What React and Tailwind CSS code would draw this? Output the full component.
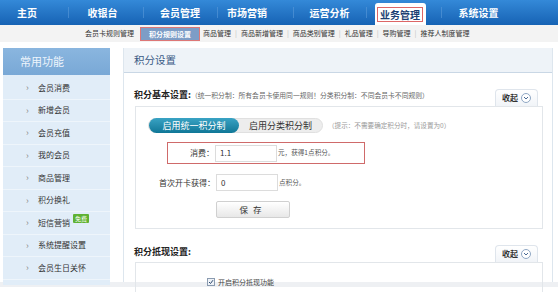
import React from 'react';

const topNav = [
  { label: '主页', w: 'w-[68px]', pad: 'pr-[14px]' },
  { label: '收银台', w: 'w-[75px]', pad: 'pr-[6px]' },
  { label: '会员管理', w: 'w-[74px]', pad: '' },
  { label: '市场营销', w: 'w-[76px]', pad: 'pr-[16px]' },
  { label: '运营分析', w: 'w-[73px]', pad: '' },
  { label: '业务管理', w: 'w-[75px]', pad: '', active: true },
  { label: '系统设置', w: 'w-[75px]', pad: '' },
];

const subNav = [
  '会员卡规则管理',
  '积分规则设置',
  '商品管理',
  '商品新增管理',
  '商品类别管理',
  '礼品管理',
  '导购管理',
  '推荐人制度管理',
];

const sideItems = [
  '会员消费',
  '新增会员',
  '会员充值',
  '我的会员',
  '商品管理',
  '积分换礼',
  '短信营销',
  '系统提醒设置',
  '会员生日关怀',
];

const CollapseBtn = () => (
  <div className="flex items-center gap-[3px] h-[17px] px-[6px] rounded-t-[4px] border border-b-0 border-[#dfe5ec] bg-gradient-to-b from-white to-[#f1f4f8]">
    <span className="text-[8px] font-bold text-[#333]">收起</span>
    <span className="flex items-center justify-center w-[10px] h-[10px] rounded-full border border-[#8fa7c4] bg-white">
      <svg width="6" height="4" viewBox="0 0 6 4">
        <path d="M1 1 L3 3 L5 1" fill="none" stroke="#4a6a94" strokeWidth="1" />
      </svg>
    </span>
  </div>
);

export default function App() {
  return (
    <div className="w-[558px] h-[292px] overflow-hidden bg-white font-['Noto_Sans_CJK_SC','Noto_Sans',sans-serif]">
      {/* Top nav */}
      <div className="flex h-[25px] bg-gradient-to-b from-[#3489d8] to-[#1663b4]">
        {topNav.map((item, i) => (
          <div key={item.label} className={`relative flex items-end justify-center ${item.w} ${item.pad}`}>
            {i > 0 && <span className="absolute left-0 top-[7px] h-[11px] w-px bg-[#5a9ad8] opacity-60" />}
            {item.active ? (
              <div className="flex items-center justify-center w-[51px] h-[22px] ml-[-7px] bg-white rounded-t-[3px]">
                <span className="px-[2px] h-[15px] leading-[13px] border border-[#d66] text-[10px] font-bold text-[#1b3f73]">
                  {item.label}
                </span>
              </div>
            ) : (
              <span className="h-full flex items-center text-[10px] font-bold text-white">{item.label}</span>
            )}
          </div>
        ))}
      </div>

      {/* Sub nav */}
      <div className="flex items-center h-[17px] pl-[85px] bg-[#f3f3f3] text-[7px] text-[#333]">
        {subNav.map((s, i) => (
          <React.Fragment key={s}>
            {i > 2 && <span className="mx-[4px] text-[#bbb]">|</span>}
            {i === 1 ? (
              <span className="ml-[6px] mr-[3px] px-[8px] h-[14px] leading-[12px] border border-[#d77] bg-[#7d9dc6] text-white font-bold">
                {s}
              </span>
            ) : (
              <span>{s}</span>
            )}
          </React.Fragment>
        ))}
      </div>

      {/* Body */}
      <div className="flex h-[245px] pt-[6px] border-b-[5px] border-[#eef0f3]">
        {/* Sidebar */}
        <div className="ml-[3px] w-[107px] h-[237px] bg-[#e1edf8]">
          <div className="h-[27px] flex items-center pl-[17px] bg-gradient-to-b from-[#8ab6df] to-[#79a8d6] text-[11px] text-[#eef5fc]">
            常用功能
          </div>
          <div className="pt-[2px]">
            {sideItems.map((s) => (
              <div key={s} className="flex items-center h-[22.5px] border-b border-[#eef5fb] text-[8px] text-[#333]">
                <span className="w-[35px] pl-[23px] text-[9px] text-[#888]">›</span>
                <span>{s}</span>
                {s === '短信营销' && (
                  <span className="relative ml-[3px] mt-[-9px] px-[2px] h-[9px] leading-[9px] bg-[#5fb233] text-white text-[6px] rounded-[1px]">
                    免费
                  </span>
                )}
              </div>
            ))}
          </div>
        </div>

        {/* Main */}
        <div className="ml-[13px] w-[430px] border-x border-[#dde6ee]">
          <div className="h-[25px] flex items-center pl-[10px] bg-[#eef3f8] border-b border-[#c9d7e5] text-[10.5px] text-[#3a5a85]">
            积分设置
          </div>

          {/* Section 1 */}
          <div className="flex items-end justify-between h-[33px] pl-[10px] pr-[14px]">
            <div className="mb-[5px] flex items-baseline">
              <span className="text-[9px] font-bold text-[#222]">积分基本设置:</span>
              <span className="text-[6.8px] text-[#666]">（统一积分制：所有会员卡使用同一规则！分类积分制：不同会员卡不同规则）</span>
            </div>
            <CollapseBtn />
          </div>
          <div className="ml-[11px] w-[408px] border border-[#e2e6ea] pt-[11px] pb-[10px]">
            <div className="flex items-center pl-[12px]">
              <div className="flex items-center w-[175px] h-[15px] rounded-full bg-[#ededed] border border-[#e0e0e0]">
                <div className="flex items-center justify-center w-[90px] h-[15px] rounded-full bg-gradient-to-b from-[#39a3c4] to-[#0e7797] text-[9px] text-white">
                  启用统一积分制
                </div>
                <div className="flex-1 text-center text-[9px] text-[#333]">启用分类积分制</div>
              </div>
              <span className="ml-[5px] text-[6.6px] text-[#999]">（提示：不需要确定积分时，请设置为0）</span>
            </div>

            <div className="flex items-center ml-[31px] mt-[9px] w-[198px] h-[22px] border border-[#cf6a6a]">
              <span className="w-[46px] text-right text-[8px] text-[#333]">消费：</span>
              <div className="ml-[1px] w-[62px] h-[17px] border border-[#dcdcdc] flex items-center pl-[4px] text-[8px] text-[#333]">
                1.1
              </div>
              <span className="ml-[1px] text-[6.6px] text-[#555]">元，获得1点积分。</span>
            </div>

            <div className="flex items-center mt-[10px]">
              <span className="w-[79px] text-right text-[8px] text-[#333]">首次开卡获得：</span>
              <div className="ml-[1px] w-[62px] h-[17px] border border-[#dcdcdc] flex items-center pl-[4px] text-[8px] text-[#333]">
                0
              </div>
              <span className="ml-[1px] text-[6.6px] text-[#555]">点积分。</span>
            </div>

            <div className="ml-[80px] mt-[10px] w-[74px] h-[17px] flex items-center justify-center rounded-[2px] border border-[#d0d0d0] bg-gradient-to-b from-white to-[#e8e8e8] text-[8.5px] text-[#333] tracking-[5px]">
              保存
            </div>
          </div>

          {/* Section 2 */}
          <div className="flex items-end justify-between h-[33px] pl-[10px] pr-[14px]">
            <span className="mb-[4px] text-[9px] font-bold text-[#222]">积分抵现设置:</span>
            <CollapseBtn />
          </div>
          <div className="ml-[11px] w-[408px] h-[40px] border border-[#e2e6ea] pt-[14px] pl-[71px]">
            <div className="flex items-center gap-[3px]">
              <span className="flex items-center justify-center w-[8px] h-[8px] border border-[#8a9bb0] bg-[#eef2f7]">
                <svg width="6" height="6" viewBox="0 0 6 6">
                  <path d="M1 3 L2.5 4.5 L5 1.2" fill="none" stroke="#2d4a70" strokeWidth="1" />
                </svg>
              </span>
              <span className="text-[7px] text-[#444]">开启积分抵现功能</span>
            </div>
          </div>
        </div>
      </div>
    </div>
  );
}
